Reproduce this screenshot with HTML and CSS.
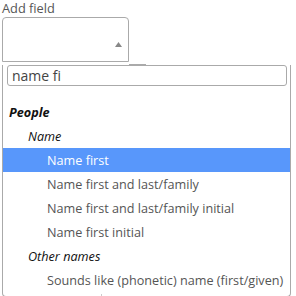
FILE: index.html
```html
<!DOCTYPE html>
<html>
<head>
<meta charset="utf-8">
<link rel="stylesheet" href="styles.css">
</head>
<body>
<div class="field">
  <div class="label">Add field</div>
  <div class="select">
    <svg class="arrow" width="7" height="5" viewBox="0 0 7 5"><path d="M0 5 L3.5 0 L7 5 Z" fill="#888"/></svg>
  </div>
  <div class="dropdown">
    <div class="search"><span class="search-text">name fi</span></div>
    <ul class="results">
      <li class="group g1">People</li>
      <li class="group g2">Name</li>
      <li class="opt active">Name first</li>
      <li class="opt">Name first and last/family</li>
      <li class="opt">Name first and last/family initial</li>
      <li class="opt">Name first initial</li>
      <li class="group g2">Other names</li>
      <li class="opt">Sounds like (phonetic) name (first/given)</li>
    </ul>
  </div>
  <div class="below"></div>
</div>
</body>
</html>
```
FILE: styles.css
```css
html, body {
  margin: 0;
  padding: 0;
  background: #fff;
}
body {
  font-family: "Open Sans", "DejaVu Sans", sans-serif;
  font-size: 13px;
  color: #555;
}
.field {
  position: relative;
  width: 296px;
  height: 296px;
}
.label {
  line-height: 17px;
  height: 17px;
  padding-left: 2px;
  color: #555;
  font-size: 12.8px;
}
.select {
  margin-left: 2px;
  width: 125px;
  height: 43px;
  border: 1px solid #aaa;
  border-radius: 4px 4px 0 0;
  display: flex;
  justify-content: flex-end;
  align-items: flex-end;
  box-sizing: content-box;
}
.arrow {
  margin: 0 6px 14px 0;
  display: block;
}
.dropdown {
  position: relative;
  margin-left: 2px;
  width: 287px;
  height: 231px;
  border: 1px solid #aaa;
  border-top: none;
  border-radius: 0 0 4px 4px;
}
.dropdown::before {
  content: "";
  position: absolute;
  left: 126px;
  top: -1px;
  width: 17px;
  height: 1px;
  background: #aaa;
}
.search {
  margin: 3px 3px 0 4px;
  height: 19px;
  border: 1px solid #aaa;
  border-radius: 3px;
  display: flex;
  align-items: center;
  padding-left: 4px;
}
.search-text {
  font-size: 14px;
  color: #444;
  line-height: 19px;
}
.results {
  list-style: none;
  margin: 14px 0 0 0;
  padding: 0;
  font-size: 12.65px;
}
.results li {
  height: 24px;
  line-height: 24px;
  white-space: nowrap;
}
.group {
  font-style: italic;
  color: #111;
}
.g1 {
  font-weight: bold;
  padding-left: 6px;
}
.g2 {
  padding-left: 25px;
}
.opt {
  padding-left: 44px;
  color: #555;
}
.opt.active {
  background: #5897fb;
  color: #fff;
}
.below {
  position: absolute;
  left: 101px;
  top: 294px;
  width: 1px;
  height: 2px;
  background: #ccc;
}
```
